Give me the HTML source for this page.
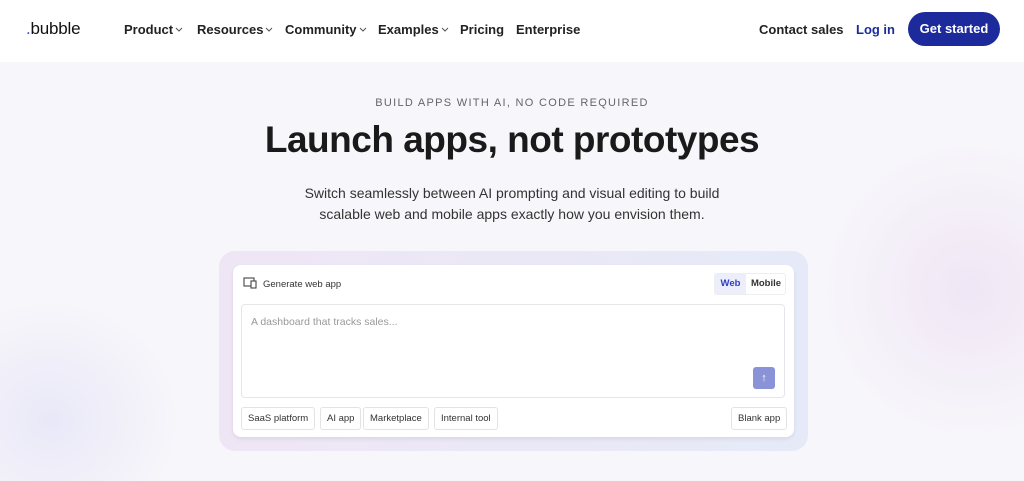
<!DOCTYPE html>
<html><head><meta charset="utf-8"><style>
*{box-sizing:border-box;margin:0;padding:0}
html,body{width:1024px;height:481px;overflow:hidden}
body{font-family:"Liberation Sans",sans-serif;background:#f7f6fa;position:relative;color:#1a1a1a}
.bg{position:absolute;left:0;top:0;width:1024px;height:481px;overflow:hidden}
.nav{position:absolute;left:0;top:0;width:1024px;height:62px;background:#fff}
.nav span{position:absolute;top:22px;font-size:13px;font-weight:bold;color:#222;white-space:nowrap}
.logo{left:26px;font-size:17px!important;top:19px!important;font-weight:normal!important;letter-spacing:-0.2px;color:#111!important}
.chev{display:inline-block;vertical-align:middle;margin-left:2px;margin-top:-2px}
.btn{position:absolute;left:908px;top:12px;width:92px;height:34px;border-radius:17px;background:#1c2a9c;color:#fff;font-size:13px;font-weight:bold;text-align:center;line-height:34px}
.blob1{position:absolute;left:-80px;top:300px;width:260px;height:240px;border-radius:50%;background:radial-gradient(#e9e8f8,transparent 70%)}
.blob2{position:absolute;left:820px;top:140px;width:300px;height:300px;border-radius:50%;background:radial-gradient(#f0e6f5,transparent 70%)}
.c{position:absolute;left:0;width:1024px;text-align:center}
.frame{position:absolute;left:219px;top:251px;width:589px;height:200px;border-radius:16px;background:linear-gradient(90deg,#efe6f5,#e6eaf8)}
.card{position:absolute;left:233px;top:265px;width:561px;height:172px;border-radius:8px;background:#fff;box-shadow:0 2px 4px rgba(0,0,0,.08)}
.ta{position:absolute;left:8px;top:39px;width:544px;height:94px;border:1px solid #e6e6ea;border-radius:4px}
.chip{position:absolute;top:142px;height:23px;border:1px solid #e3e3e7;border-radius:3px;font-size:9.5px;line-height:21px;padding:0 6px;color:#333}
</style></head><body>
<div class="bg"><div class="blob1"></div><div class="blob2"></div></div>
<div class="nav">
<span class="logo"><span style="position:static;color:#3a4ee0;font-size:17px;font-weight:normal">.</span>bubble</span>
<span style="left:124px">Product<svg class="chev" width="8" height="5" viewBox="0 0 8 5"><path d="M1 1l3 3 3-3" fill="none" stroke="#555" stroke-width="1"/></svg></span>
<span style="left:197px">Resources<svg class="chev" width="8" height="5" viewBox="0 0 8 5"><path d="M1 1l3 3 3-3" fill="none" stroke="#555" stroke-width="1"/></svg></span>
<span style="left:285px">Community<svg class="chev" width="8" height="5" viewBox="0 0 8 5"><path d="M1 1l3 3 3-3" fill="none" stroke="#555" stroke-width="1"/></svg></span>
<span style="left:378px">Examples<svg class="chev" width="8" height="5" viewBox="0 0 8 5"><path d="M1 1l3 3 3-3" fill="none" stroke="#555" stroke-width="1"/></svg></span>
<span style="left:460px">Pricing</span>
<span style="left:516px">Enterprise</span>
<span style="left:759px">Contact sales</span>
<span style="left:856px;color:#1c2a9c">Log in</span>
<div class="btn">Get started</div>
</div>
<div class="c" style="top:97px;font-size:11px;letter-spacing:1.3px;color:#666">BUILD APPS WITH AI, NO CODE REQUIRED</div>
<div class="c" style="top:119px;font-size:37px;font-weight:bold;letter-spacing:-0.5px;color:#1a1a1a">Launch apps, not prototypes</div>
<div class="c" style="top:183px;font-size:14px;line-height:21px;color:#333">Switch seamlessly between AI prompting and visual editing to build<br>scalable web and mobile apps exactly how you envision them.</div>
<div class="frame"></div>
<div class="card">
<svg style="position:absolute;left:10px;top:12px" width="14" height="12" viewBox="0 0 14 12" fill="none" stroke="#444" stroke-width="1.1"><rect x="1" y="1" width="10" height="8"/><rect x="8" y="4" width="5" height="7" fill="#fff"/></svg>
<div style="position:absolute;left:30px;top:14px;font-size:9.5px;color:#333">Generate web app</div>
<div style="position:absolute;left:481px;top:8px;width:72px;height:22px;border:1px solid #eee;border-radius:3px;font-size:9.5px;font-weight:bold">
<div style="position:absolute;left:0;top:0;width:31px;height:20px;background:#eceefb;color:#2f3fc4;text-align:center;line-height:20px">Web</div>
<div style="position:absolute;left:31px;top:0;width:40px;line-height:20px;text-align:center;color:#333">Mobile</div></div>
<div class="ta"><div style="position:absolute;left:9px;top:11px;font-size:10.5px;color:#999">A dashboard that tracks sales...</div>
<div style="position:absolute;left:511px;top:62px;width:22px;height:22px;border-radius:3px;background:#8b93d8;color:#fff;text-align:center;line-height:22px;font-size:11px">&#8593;</div></div>
<div class="chip" style="left:8px">SaaS platform</div>
<div class="chip" style="left:87px">AI app</div>
<div class="chip" style="left:130px">Marketplace</div>
<div class="chip" style="left:201px">Internal tool</div>
<div class="chip" style="left:498px">Blank app</div>
</div>
</body></html>
